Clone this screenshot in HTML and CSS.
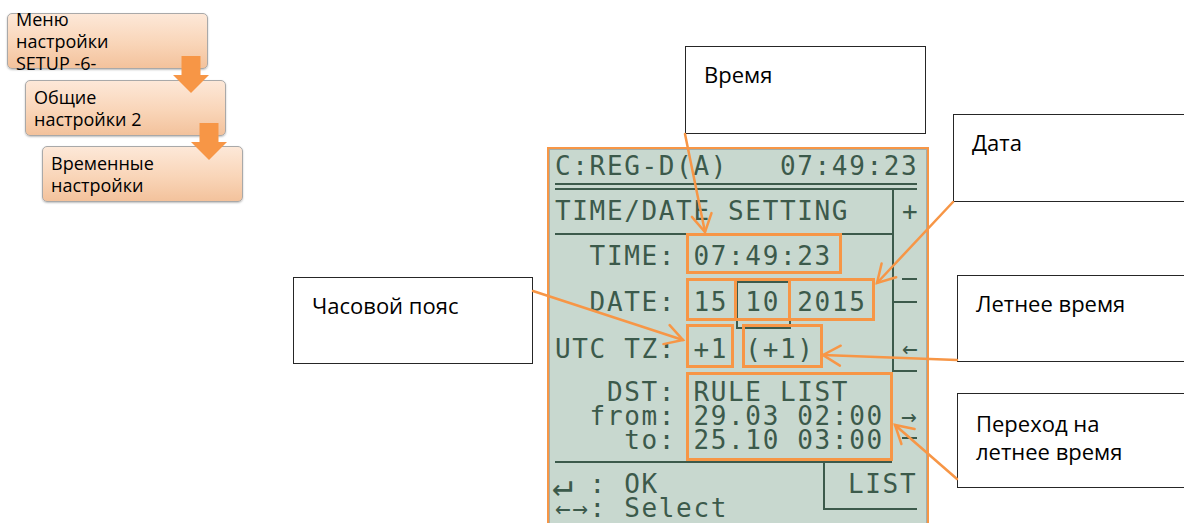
FILE: index.html
```html
<!DOCTYPE html>
<html lang="ru">
<head>
  <meta charset="UTF-8">
  <meta name="viewport" content="width=device-width, initial-scale=1.0">
  <title>Временные настройки</title>
  <link rel="stylesheet" href="styles.css">
</head>
<body>
<div class="page">

  <div class="menu">
    <div class="step step-1">Меню<br>настройки<br>SETUP -6-</div>
    <div class="step step-2">Общие<br>настройки 2</div>
    <div class="step step-3">Временные<br>настройки</div>
  </div>

  <div class="lcd">
    <div class="screen">
      <div class="lcd-head">C:REG-D(A)   07:49:23</div>
      <div class="dbl-line"></div>
      <div class="lcd-top">
        <div class="lcd-main">
          <div class="row row-title">TIME/DATE SETTING</div>
          <div class="row row-time">  TIME: 07:49:23</div>
          <div class="row row-date">  DATE: 15 <span class="sel">10</span> 2015</div>
          <div class="row row-utc">UTC TZ: +1 (+1)</div>
        </div>
        <div class="lcd-side">
          <div class="side-plus">+</div>
          <div class="side-minus"><span class="bar"></span></div>
          <div class="side-back">←</div>
        </div>
      </div>
      <div class="lcd-dst">
        <div class="line">   DST: RULE LIST</div>
        <div class="line">  from: 29.03 02:00 →</div>
        <div class="line">    to: 25.10 03:00 <span class="bar inline"></span></div>
      </div>
      <div class="rule"></div>
      <div class="lcd-foot">
        <div class="keys">
          <div class="line"><span class="enter">↵</span> : OK</div>
          <div class="line">←→: Select</div>
        </div>
        <div class="list-btn">LIST</div>
      </div>
    </div>
  </div>

  <!-- orange highlight frames -->
  <div class="mark m-time"></div>
  <div class="mark m-day"></div>
  <div class="mark m-month"></div>
  <div class="mark m-year"></div>
  <div class="mark m-tz"></div>
  <div class="mark m-dstoff"></div>
  <div class="mark m-dst"></div>

  <!-- callouts -->
  <div class="note note-time">Время</div>
  <div class="note note-date">Дата</div>
  <div class="note note-tz">Часовой пояс</div>
  <div class="note note-summer">Летнее время</div>
  <div class="note note-rule">Переход на<br>летнее время</div>

  <svg class="arrows" width="1184" height="523" viewBox="0 0 1184 523">
    <line x1="685" y1="134" x2="705" y2="232"/>
    <polyline points="691.9,216.9 705,232 711.5,213.1"/>
    <line x1="953" y1="202" x2="877" y2="283"/>
    <polyline points="881.6,263.5 877,283 896.2,277.2"/>
    <line x1="533" y1="291" x2="683" y2="340"/>
    <polyline points="669.6,325.1 683,340 663.4,344.1"/>
    <line x1="957" y1="360" x2="823" y2="355"/>
    <polyline points="840.7,345.7 823,355 839.9,365.6"/>
    <line x1="957" y1="479" x2="895" y2="425"/>
    <polyline points="914.6,429 895,425 901.4,444"/>
  </svg>

</div>
</body>
</html>
```

FILE: styles.css
```css
* {
  box-sizing: border-box;
}
body {
  margin: 0;
  background: #fff;
  font-family: 'Open Sans', sans-serif;
}
.page {
  position: relative;
  width: 1184px;
  height: 523px;
  overflow: hidden;
}

/* menu path on the left */
.menu {
  padding: 13px 0 0 7px;
}
.step {
  position: relative;
  width: 201px;
  height: 56px;
  display: flex;
  flex-direction: column;
  justify-content: center;
  padding-left: 8px;
  border: 1px solid #a9a9a9;
  border-radius: 5px;
  background: linear-gradient(#fde8d8, #f9d5b8 55%, #f3c29c);
  box-shadow: 0 1px 2px rgba(0,0,0,0.25);
  font-size: 18px;
  line-height: 22px;
  color: #000;
}
.step-2 {
  margin: 11px 0 0 18px;
}
.step-3 {
  margin: 10px 0 0 35px;
}
.step-1::after, .step-2::after {
  content: "";
  position: absolute;
  left: 165px;
  top: 42px;
  width: 36px;
  height: 37px;
  background: #f79646;
  clip-path: polygon(8.5px 0, 27.5px 0, 27.5px 19px, 36px 19px, 18px 37px, 0 19px, 8.5px 19px);
  z-index: 2;
}

/* lcd screen */
.lcd {
  position: absolute;
  left: 547px;
  top: 147px;
  width: 382px;
  height: 390px;
  border: 2px solid #f79646;
}
.screen {
  height: 100%;
  border: 1px solid #a3ada8;
  background: #c8d8cf;
  padding: 0 9px 0 5px;
  font-family: 'DejaVu Sans Mono', monospace;
  font-size: 26px;
  letter-spacing: 1.65px;
  color: #3c5a4b;
}
.lcd-head, .row, .line, .list-btn, .side-plus, .side-back {
  white-space: pre;
}
.lcd-head {
  height: 33px;
  line-height: 33px;
}
.dbl-line {
  height: 7px;
  border-top: 2px solid #3c5a4b;
  border-bottom: 2px solid #3c5a4b;
}
.lcd-top {
  display: grid;
  grid-template-columns: 337px 25px;
}
.row-title {
  height: 45px;
  line-height: 43px;
  border-bottom: 2px solid #3c5a4b;
}
.row-time {
  height: 43px;
  line-height: 43px;
}
.row-date {
  height: 48px;
  line-height: 48px;
}
.row-utc {
  height: 46px;
  line-height: 46px;
}
.sel {
  position: relative;
}
.sel::after {
  content: "";
  position: absolute;
  left: -9px;
  right: -11px;
  top: -6px;
  bottom: -12px;
  border: 2px solid #3c5a4b;
}
.lcd-side {
  border-left: 2px solid #3c5a4b;
}
.side-plus {
  height: 43px;
  line-height: 43px;
  padding-left: 8px;
}
.side-minus {
  height: 70px;
  padding-top: 45px;
  border-bottom: 2px solid #3c5a4b;
}
.bar {
  display: block;
  width: 15px;
  height: 2px;
  margin-left: 8px;
  background: #3c5a4b;
}
.bar.inline {
  display: inline-block;
  margin-left: 1px;
  vertical-align: 0.4em;
}
.side-back {
  height: 69px;
  padding: 33px 0 0 8px;
  line-height: 24px;
  border-bottom: 2px solid #3c5a4b;
}
.lcd-dst {
  padding-top: 8px;
  line-height: 24px;
}
.rule {
  width: 337px;
  height: 2px;
  margin-top: 9px;
  background: #3c5a4b;
}
.lcd-foot {
  display: grid;
  grid-template-columns: 268px 94px;
}
.keys {
  padding-top: 9px;
  line-height: 24px;
}
.enter {
  display: inline-block;
  width: 17.3px;
  letter-spacing: 0;
  transform: scale(1.35);
}
.list-btn {
  height: 47px;
  padding: 9px 0 0 23px;
  line-height: 24px;
  border-left: 2px solid #3c5a4b;
  border-bottom: 2px solid #3c5a4b;
}

/* orange frames over the screen */
.mark {
  position: absolute;
  border: 3px solid #f79646;
}
.m-time   { left: 686px; top: 233px; width: 156px; height: 41px; }
.m-day    { left: 686px; top: 278px; width: 51px;  height: 43px; }
.m-month  { left: 734px; top: 278px; width: 57px;  height: 43px; }
.m-year   { left: 788px; top: 278px; width: 87px;  height: 43px; }
.m-tz     { left: 686px; top: 324px; width: 48px;  height: 44px; }
.m-dstoff { left: 742px; top: 324px; width: 81px;  height: 44px; }
.m-dst    { left: 686px; top: 372px; width: 207px; height: 89px; }

/* callouts */
.note {
  position: absolute;
  background: #fff;
  border: 1px solid #262626;
  padding: 13px 0 0 18px;
  font-size: 22px;
  line-height: 28px;
  color: #000;
}
.note-time   { left: 685px; top: 46px;  width: 241px; height: 88px; }
.note-date   { left: 953px; top: 114px; width: 250px; height: 88px; }
.note-tz     { left: 293px; top: 277px; width: 240px; height: 87px; }
.note-summer { left: 957px; top: 275px; width: 240px; height: 87px; }
.note-rule   { left: 957px; top: 393px; width: 240px; height: 95px; padding-top: 15px; }

.arrows {
  position: absolute;
  left: 0;
  top: 0;
  fill: none;
  stroke: #f79646;
  stroke-width: 2.5;
  stroke-linecap: round;
}
```
